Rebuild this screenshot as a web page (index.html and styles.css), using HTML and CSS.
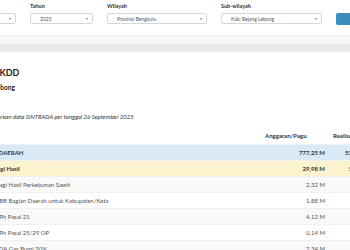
FILE: index.html
```html
<!DOCTYPE html>
<html lang="id">
<head>
    <meta charset="UTF-8">
    <meta name="viewport" content="width=device-width, initial-scale=1.0">
    <title>Realisasi TKDD</title>
    <link rel="stylesheet" href="styles.css">
</head>
<body>
    <!-- Filter -->
    <div class="filter-card">
        <div class="filters">
            <div class="field field-sm">
                <label>Bulan</label>
                <div class="select"><span>Semua</span><span class="caret">&#9662;</span></div>
            </div>
            <div class="field field-sm">
                <label>Tahun</label>
                <div class="select"><span>2025</span><span class="caret">&#9662;</span></div>
            </div>
            <div class="field field-lg">
                <label>Wilayah</label>
                <div class="select"><span>Provinsi Bengkulu</span><span class="caret">&#9662;</span></div>
            </div>
            <div class="field field-lg">
                <label>Sub-wilayah</label>
                <div class="select"><span>Kab. Rejang Lebong</span><span class="caret">&#9662;</span></div>
            </div>
            <button class="btn-show">Tampilkan</button>
        </div>
    </div>

    <div class="gap-band"></div>

    <!-- Konten -->
    <div class="card">
        <div class="card-head"></div>
        <div class="content">
            <h1 class="title">Realisasi TKDD</h1>
            <p class="subtitle">Kab. Rejang Lebong</p>
            <p class="note">Dihitung berdasarkan data SINTRADA per tanggal 26 September 2025</p>

            <table class="report">
                <thead>
                    <tr>
                        <th class="col-name"></th>
                        <th class="col-num">Anggaran/Pagu</th>
                        <th class="col-real">Realisasi</th>
                    </tr>
                </thead>
                <tbody>
                    <tr class="row-total">
                        <td>TRANSFER KE DAERAH</td>
                        <td class="num">777,25 M</td>
                        <td class="num">531,40 M</td>
                    </tr>
                    <tr class="row-group">
                        <td class="lvl-1">Dana Bagi Hasil</td>
                        <td class="num">29,98 M</td>
                        <td class="num">14,27 M</td>
                    </tr>
                    <tr class="row-item">
                        <td class="lvl-2">DBH Bagi Hasil Perkebunan Sawit</td>
                        <td class="num">2,32 M</td>
                        <td class="num">1,16 M</td>
                    </tr>
                    <tr class="row-item">
                        <td class="lvl-2">DBH PBB Bagian Daerah untuk Kabupaten/Kota</td>
                        <td class="num">1,88 M</td>
                        <td class="num">0,94 M</td>
                    </tr>
                    <tr class="row-item">
                        <td class="lvl-2">DBH PPh Pasal 21</td>
                        <td class="num">4,12 M</td>
                        <td class="num">2,06 M</td>
                    </tr>
                    <tr class="row-item">
                        <td class="lvl-2">DBH PPh Pasal 25/29 OP</td>
                        <td class="num">0,14 M</td>
                        <td class="num">0,07 M</td>
                    </tr>
                    <tr class="row-item">
                        <td class="lvl-2">DBH SDA Gas Bumi 30%</td>
                        <td class="num">2,34 M</td>
                        <td class="num">1,17 M</td>
                    </tr>
                </tbody>
            </table>
        </div>
    </div>
</body>
</html>
```

FILE: styles.css
```css
body {
    font-family: Lato, "Open Sans", sans-serif;
    margin: 0;
    padding: 0;
    background-color: #ffffff;
    color: #333333;
    overflow: hidden;
}
.filter-card {
    background: #ffffff;
    height: 35px;
    border-bottom: 1px solid #eceff2;
}
.filters {
    display: flex;
    align-items: flex-end;
    gap: 14px;
    margin-left: -47px;
    padding-top: 3px;
}
.field label {
    display: block;
    font-size: 5.5px;
    font-weight: 700;
    line-height: 7px;
    margin-bottom: 3px;
    color: #333;
}
.field-sm {
    width: 63px;
    flex-shrink: 0;
}
.field-lg {
    width: 100px;
    flex-shrink: 0;
}
.field-lg:nth-child(4) {
    width: 101px;
}
.select {
    display: flex;
    justify-content: space-between;
    align-items: center;
    height: 11px;
    box-sizing: border-box;
    padding: 0 4px 0 9px;
    border: 1px solid #d3d7dc;
    border-radius: 2px;
    font-size: 5px;
    color: #555;
    white-space: nowrap;
    overflow: hidden;
}
.caret {
    font-size: 4px;
    color: #777;
}
.btn-show {
    flex-shrink: 0;
    width: 60px;
    height: 12px;
    margin-bottom: -1px;
    padding: 0 6px;
    border: none;
    border-radius: 2px;
    background: #3c8dbc;
    color: #ffffff;
    font-family: inherit;
    font-size: 5.5px;
    text-align: right;
}
.gap-band {
    height: 8px;
    background: #f6f7f9;
}
.card-head {
    height: 8px;
    background: #e9ecef;
}
.content {
    margin-left: -42px;
    padding-top: 15px;
}
.title {
    margin: 0;
    font-size: 9px;
    line-height: 12px;
    font-weight: 700;
    color: #222;
}
.subtitle {
    margin: 4px 0 0;
    font-size: 6.5px;
    line-height: 9px;
    font-weight: 700;
    color: #222;
}
.note {
    margin: 21px 0 0;
    font-size: 6px;
    line-height: 8px;
    font-style: italic;
    color: #333;
}
.report {
    width: 417px;
    margin-top: 7px;
    border-collapse: collapse;
    table-layout: fixed;
    font-size: 6px;
    white-space: nowrap;
}
.report th,
.report td {
    box-sizing: border-box;
    height: 16px;
    overflow: hidden;
}
.report th {
    padding: 0 4px;
    text-align: left;
    font-weight: 700;
    color: #333;
}
.report td {
    padding: 0 4px 0 0;
    border-top: 1px solid #eef0f2;
    color: #555;
}
.col-name {
    width: 303px;
}
.col-num {
    width: 68px;
}
.col-real {
    width: 46px;
}
.report td.num {
    text-align: right;
    padding-right: 4px;
}
.report td.lvl-1 {
    padding-left: 20px;
}
.report td.lvl-2 {
    padding-left: 23px;
}
.row-total td {
    background: #d9eaf6;
    font-weight: 700;
    color: #333;
}
.row-group td {
    background: #fcf2cd;
    font-weight: 700;
    color: #333;
}
.row-item:nth-child(odd) td {
    background: #f9f9f9;
}
```
